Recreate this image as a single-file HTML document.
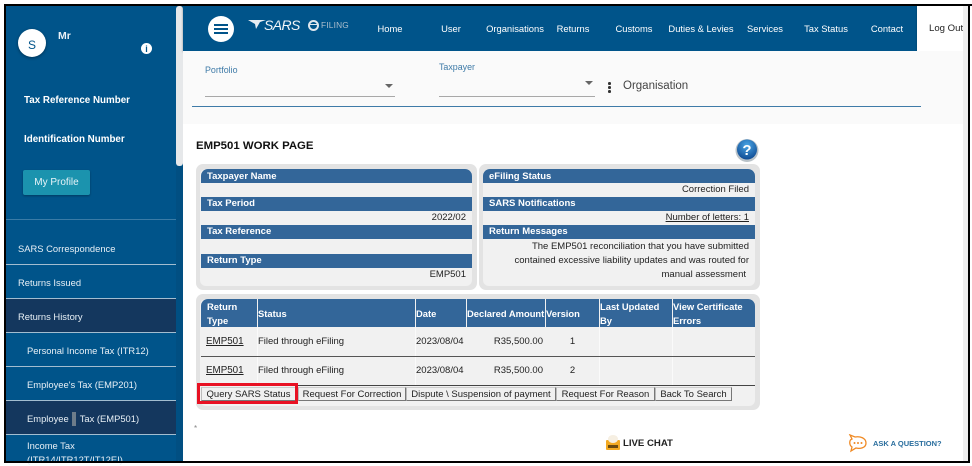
<!DOCTYPE html>
<html><head><meta charset="utf-8"><style>
html,body{margin:0;padding:0;background:#fff}
#p{position:relative;width:972px;height:466px;overflow:hidden;background:#fff;font-family:"Liberation Sans",sans-serif}
#p div,#p span.a,#p svg{position:absolute}
.t{white-space:nowrap;line-height:14px}
.nav{color:#fff;font-size:9.4px;top:22px;transform:translateX(-50%);white-space:nowrap;line-height:14px}
.side{color:#e8f0f6;font-size:9.4px;white-space:nowrap;line-height:14px}
.sep{left:6px;width:170px;height:1px;background:#a3bdd0}
.bar{background:#336699;height:14px;color:#fff;font-weight:bold;font-size:9.5px;line-height:14px;white-space:nowrap}
.val{font-size:9.5px;color:#222;white-space:nowrap;line-height:14px;text-align:right}
.th{background:#336699;color:#fff;font-weight:bold;font-size:9.4px;line-height:14px;top:299px;height:27px;padding-top:1px;white-space:nowrap}
.td{font-size:9.5px;color:#222;white-space:nowrap;line-height:14px}
.btn{top:387px;height:12px;background:#f0f0f0;border:1px solid #777;border-left-color:#bbb;border-top-color:#ccc;font-size:9.5px;line-height:13px;color:#222;text-align:center;white-space:nowrap}
</style></head><body><div id="p">

<!-- sidebar -->
<div style="left:6px;top:6px;width:177px;height:455px;background:#00548a"></div>
<div style="left:176px;top:6px;width:7px;height:160px;background:#e6e8ea;border-radius:3px"></div>
<div style="left:176px;top:166px;width:7px;height:295px;background:#014f82"></div>
<div style="left:18px;top:29px;width:28px;height:28px;border-radius:50%;background:#fff;box-shadow:0 1px 3px rgba(0,0,0,.4)"></div>
<div class="t" style="left:18px;top:38px;width:28px;text-align:center;color:#00548a;font-size:12px">S</div>
<div class="t" style="left:58px;top:29px;color:#e8f0f6;font-size:10.5px;font-weight:bold">Mr</div>
<div style="left:141px;top:43px;width:11px;height:11px;border-radius:50%;background:#fff"></div>
<div class="t" style="left:141px;top:42px;width:11px;text-align:center;color:#00548a;font-size:9px;font-weight:bold">i</div>
<div class="t" style="left:24px;top:94px;color:#fff;font-size:9.8px;font-weight:bold">Tax Reference Number</div>
<div class="t" style="left:24px;top:133px;color:#fff;font-size:9.8px;font-weight:bold">Identification Number</div>
<div style="left:23px;top:170px;width:67px;height:25px;background:#1b93ae;border-radius:2px;box-shadow:0 1px 2px rgba(0,0,0,.3)"></div>
<div class="t" style="left:23px;top:176px;width:67px;text-align:center;color:#e8f4f8;font-size:10px">My Profile</div>
<div style="left:6px;top:219px;width:170px;height:1px;background:#3a7ba6"></div>

<div class="side" style="left:18px;top:242px">SARS Correspondence</div>
<div class="sep" style="top:264px"></div>
<div class="side" style="left:18px;top:276px">Returns Issued</div>
<div style="left:6px;top:299px;width:170px;height:33px;background:#14375e"></div>
<div class="sep" style="top:298px"></div>
<div class="side" style="left:18px;top:310px">Returns History</div>
<div class="sep" style="top:332px"></div>
<div class="side" style="left:27px;top:344px">Personal Income Tax (ITR12)</div>
<div class="sep" style="top:366px"></div>
<div class="side" style="left:27px;top:378px">Employee's Tax (EMP201)</div>
<div style="left:6px;top:401px;width:170px;height:33px;background:#14375e"></div>
<div class="sep" style="top:400px"></div>
<div style="left:72px;top:412px;width:4px;height:14px;background:#6d7c8a"></div>
<div class="side" style="left:27px;top:412px">Employee<span style="display:inline-block;width:11px"></span>Tax (EMP501)</div>
<div class="sep" style="top:434px"></div>
<div class="side" style="left:27px;top:439px">Income Tax</div>
<div class="side" style="left:27px;top:453px">(ITR14/ITR12T/IT12EI)</div>

<!-- header -->
<div style="left:183px;top:6px;width:734px;height:45px;background:#00548a;box-shadow:0 1px 2px rgba(0,0,0,.4)"></div>
<div style="left:917px;top:6px;width:46px;height:45px;background:#fff;box-shadow:0 1px 2px rgba(0,0,0,.3)"></div>
<div style="left:183px;top:51px;width:780px;height:73px;background:#fafafa"></div>
<div style="left:208px;top:16px;width:26px;height:26px;border-radius:50%;background:#fff"></div>
<div style="left:214px;top:24px;width:14px;height:2px;background:#00548a"></div>
<div style="left:214px;top:28px;width:14px;height:2px;background:#00548a"></div>
<div style="left:214px;top:32px;width:14px;height:2px;background:#00548a"></div>
<svg style="left:247px;top:19px" width="20" height="12" viewBox="0 0 20 12"><path d="M1 1 L19 1 L13 3 L9 10 L8 5 Z" fill="#e8eef3"/></svg>
<div class="t" style="left:264px;top:18px;color:#f2f6f9;font-size:14px;font-style:italic;letter-spacing:-.6px">SARS</div>
<div style="left:308px;top:20px;width:7px;height:7px;border:2px solid #dfe7ee;border-radius:50%"></div>
<div style="left:310px;top:23.5px;width:7px;height:1px;background:#dfe7ee"></div>
<div class="t" style="left:321px;top:18px;color:#aebfcd;font-size:8.3px;letter-spacing:.2px">FILING</div>

<div class="nav" style="left:390px">Home</div>
<div class="nav" style="left:451px">User</div>
<div class="nav" style="left:515px">Organisations</div>
<div class="nav" style="left:573px">Returns</div>
<div class="nav" style="left:634px">Customs</div>
<div class="nav" style="left:701px">Duties &amp; Levies</div>
<div class="nav" style="left:765px">Services</div>
<div class="nav" style="left:826px">Tax Status</div>
<div class="nav" style="left:887px">Contact</div>
<div class="t" style="left:929px;top:22px;color:#222;font-size:9.6px">Log Out</div>

<!-- filters -->
<div class="t" style="left:205px;top:63px;color:#3f7ba8;font-size:8.9px">Portfolio</div>
<div style="left:205px;top:96px;width:190px;height:1px;background:#a8a8a8"></div>
<div style="left:385px;top:84px;width:0;height:0;border:4px solid transparent;border-top:4px solid #666"></div>
<div class="t" style="left:439px;top:60px;color:#3f7ba8;font-size:8.9px">Taxpayer</div>
<div style="left:439px;top:96px;width:156px;height:1px;background:#a8a8a8"></div>
<div style="left:585px;top:81px;width:0;height:0;border:4px solid transparent;border-top:4px solid #666"></div>
<div style="left:608px;top:82px;width:2.5px;height:2.5px;background:#333;border-radius:50%"></div>
<div style="left:608px;top:86px;width:2.5px;height:2.5px;background:#333;border-radius:50%"></div>
<div style="left:608px;top:90px;width:2.5px;height:2.5px;background:#333;border-radius:50%"></div>
<div class="t" style="left:623px;top:79px;color:#444;font-size:11.5px">Organisation</div>
<div style="left:192px;top:106px;width:729px;height:1px;background:#3f7ba8"></div>

<!-- title -->
<div class="t" style="left:196px;top:139px;color:#111;font-size:11.4px;font-weight:bold">EMP501 WORK PAGE</div>
<svg style="left:735px;top:138px" width="24" height="24" viewBox="0 0 24 24"><defs><radialGradient id="g" cx=".5" cy=".3" r=".8"><stop offset="0" stop-color="#4aa6e6"/><stop offset="1" stop-color="#083f88"/></radialGradient></defs><circle cx="12" cy="12.5" r="11.5" fill="#b9c2c8"/><circle cx="12" cy="11.5" r="10" fill="url(#g)"/><text x="12" y="17" font-size="15" font-weight="bold" text-anchor="middle" fill="#fff" font-family="Liberation Sans">?</text></svg>

<!-- left panel -->
<div style="left:196px;top:164px;width:281px;height:126px;background:#e3e3e3;border-radius:7px"></div>
<div style="left:200px;top:169px;width:272px;height:117px;background:#f1f1f1;border-radius:6px"></div>
<div class="bar" style="left:201px;top:169px;width:265px;padding-left:6px;border-radius:7px 7px 0 0;line-height:15px">Taxpayer Name</div>
<div class="bar" style="left:201px;top:197px;width:265px;padding-left:6px">Tax Period</div>
<div class="val" style="left:300px;top:211px;width:166px">2022/02</div>
<div class="bar" style="left:201px;top:225px;width:265px;padding-left:6px">Tax Reference</div>
<div class="bar" style="left:201px;top:254px;width:265px;padding-left:6px">Return Type</div>
<div class="val" style="left:300px;top:268px;width:166px">EMP501</div>

<!-- right panel -->
<div style="left:479px;top:164px;width:281px;height:126px;background:#e3e3e3;border-radius:7px"></div>
<div style="left:483px;top:169px;width:272px;height:117px;background:#f1f1f1;border-radius:6px"></div>
<div class="bar" style="left:483px;top:169px;width:266px;padding-left:6px;border-radius:7px 7px 0 0;line-height:15px">eFiling Status</div>
<div class="val" style="left:600px;top:183px;width:149px">Correction Filed</div>
<div class="bar" style="left:483px;top:197px;width:266px;padding-left:6px">SARS Notifications</div>
<div class="val" style="left:600px;top:211px;width:149px;text-decoration:underline">Number of letters: 1</div>
<div class="bar" style="left:483px;top:225px;width:266px;padding-left:6px">Return Messages</div>
<div class="val" style="left:500px;top:240px;width:249px">The EMP501 reconciliation that you have submitted</div>
<div class="val" style="left:500px;top:254px;width:249px">contained excessive liability updates and was routed for</div>
<div class="val" style="left:500px;top:268px;width:246px">manual assessment</div>

<!-- table panel -->
<div style="left:196px;top:294px;width:564px;height:116px;background:#e3e3e3;border-radius:7px"></div>
<div style="left:200px;top:299px;width:555px;height:107px;background:#f1f1f1;border-radius:6px"></div>
<div class="th" style="left:201px;width:50px;padding-left:6px;border-radius:7px 0 0 0">Return<br>Type</div>
<div class="th" style="left:258px;width:157px;line-height:28px">Status</div>
<div class="th" style="left:416px;width:50px;line-height:28px">Date</div>
<div class="th" style="left:467px;width:78px;line-height:28px">Declared Amount</div>
<div class="th" style="left:546px;width:53px;line-height:28px">Version</div>
<div class="th" style="left:600px;width:72px">Last Updated<br>By</div>
<div class="th" style="left:673px;width:82px;border-radius:0 7px 0 0">View Certificate<br>Errors</div>
<div style="left:257px;top:327px;width:1px;height:58px;background:#fafafa"></div>
<div style="left:415px;top:327px;width:1px;height:58px;background:#fafafa"></div>
<div style="left:599px;top:327px;width:1px;height:58px;background:#fafafa"></div>
<div style="left:672px;top:327px;width:1px;height:58px;background:#fafafa"></div>
<div style="left:201px;top:356px;width:554px;height:1px;background:#555"></div>
<div style="left:201px;top:385px;width:554px;height:1px;background:#444"></div>

<div class="td" style="left:206px;top:335px;text-decoration:underline;font-size:9.8px">EMP501</div>
<div class="td" style="left:258px;top:335px">Filed through eFiling</div>
<div class="td" style="left:416px;top:335px">2023/08/04</div>
<div class="td" style="left:450px;top:335px;width:93px;text-align:right">R35,500.00</div>
<div class="td" style="left:546px;top:335px;width:53px;text-align:center">1</div>
<div class="td" style="left:206px;top:364px;text-decoration:underline;font-size:9.8px">EMP501</div>
<div class="td" style="left:258px;top:364px">Filed through eFiling</div>
<div class="td" style="left:416px;top:364px">2023/08/04</div>
<div class="td" style="left:450px;top:364px;width:93px;text-align:right">R35,500.00</div>
<div class="td" style="left:546px;top:364px;width:53px;text-align:center">2</div>

<div class="btn" style="left:201px;width:93px">Query SARS Status</div>
<div class="btn" style="left:298px;width:106px">Request For Correction</div>
<div class="btn" style="left:406px;width:148px">Dispute \ Suspension of payment</div>
<div class="btn" style="left:556px;width:97px">Request For Reason</div>
<div class="btn" style="left:655px;width:75px">Back To Search</div>
<div style="left:197px;top:383px;width:95px;height:15px;border:3px solid #e81123"></div>

<div class="t" style="left:194px;top:422px;color:#888;font-size:8px">*</div>

<!-- footer -->
<div style="left:606px;top:440px;width:14px;height:10px;background:#f2a922;border-radius:1px"></div>
<div style="left:608px;top:435px;width:10px;height:8px;background:#f6efe2;border-radius:50%"></div>
<div style="left:608px;top:445px;width:10px;height:3px;background:#6a4a10"></div>
<div class="t" style="left:623px;top:437px;color:#222;font-size:9.6px;font-weight:bold">LIVE CHAT</div>
<svg style="left:848px;top:434px" width="20" height="20" viewBox="0 0 20 20"><path d="M2 1 L7 3 C12 2 18 4 18 9 C18 14 12 15 8 14 L3 17 L4 13 C1 11 1 6 4 5 Z" fill="#fff" stroke="#f08a24" stroke-width="1.3"/><circle cx="6.5" cy="9" r="1" fill="#f08a24"/><circle cx="10" cy="9" r="1" fill="#f08a24"/><circle cx="13.5" cy="9" r="1" fill="#f08a24"/></svg>
<div class="t" style="left:873px;top:437px;color:#2a6e9e;font-size:7.5px;font-weight:bold">ASK A QUESTION?</div>

<!-- right scrollbar + frame -->
<div style="left:963px;top:6px;width:5px;height:455px;background:#eeeeee"></div>
<div style="left:0;top:4px;width:972px;height:2px;background:#000"></div>
<div style="left:4px;top:4px;width:2px;height:459px;background:#000"></div>
<div style="left:4px;top:461px;width:966px;height:2px;background:#000"></div>
<div style="left:968px;top:4px;width:2px;height:459px;background:#000"></div>
<div style="left:0;top:0;width:4px;height:466px;background:#fff"></div>
</div></body></html>
